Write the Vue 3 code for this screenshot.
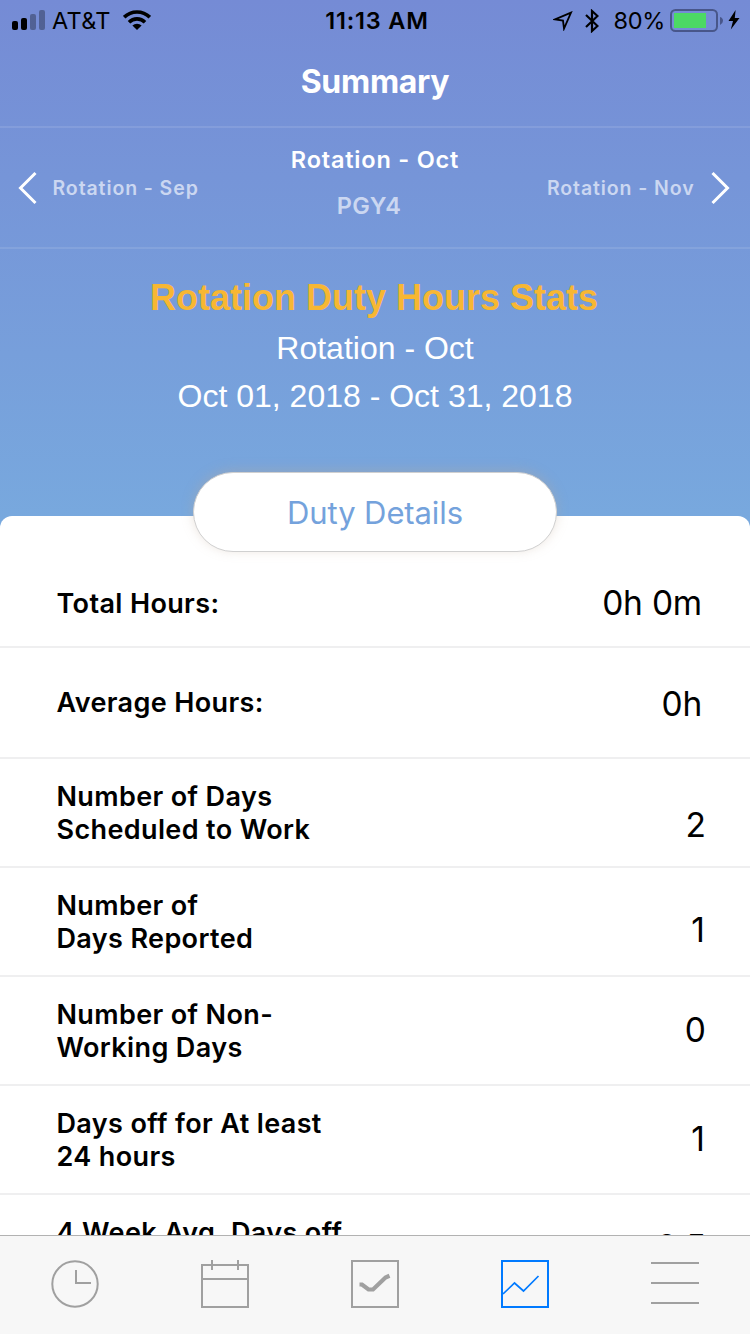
<template>
  <div class="summary-page">
    <header class="status-bar">
      <div class="status-left">
        <svg class="signal" width="34" height="20" viewBox="0 0 34 20">
          <rect x="0" y="11" width="6" height="9" rx="2" />
          <rect x="9" y="8" width="6" height="12" rx="2" />
          <rect class="dim" x="18" y="4" width="6" height="16" rx="2" />
          <rect class="dim" x="27" y="0" width="6" height="20" rx="2" />
        </svg>
        <span class="carrier">AT&amp;T</span>
        <svg class="wifi" width="28" height="20" viewBox="0 0 28 20">
          <path d="M1.2 7.2A18.2 18.2 0 0 1 26.8 7.2" />
          <path d="M6 12.2A11.4 11.4 0 0 1 22 12.2" />
          <path class="fill" d="M14 20L9.4 15.6A6.6 6.6 0 0 1 18.6 15.6Z" />
        </svg>
      </div>
      <div class="status-time">11:13 AM</div>
      <div class="status-right">
        <svg class="location" width="20" height="20" viewBox="0 0 20 20">
          <path d="M18 1.6L2 8.4L10 9.6L11 17.6Z" />
        </svg>
        <svg class="bluetooth" width="14" height="24" viewBox="0 0 14 24">
          <path d="M1 6L12.5 17L7 22V2L12.5 7L1 18" />
        </svg>
        <span class="percent">80%</span>
        <svg class="battery" width="54" height="24" viewBox="0 0 54 24">
          <rect class="shell" x="1" y="1" width="46" height="21" rx="4.5" />
          <rect class="level" x="4" y="4" width="32" height="15" />
          <path class="cap" d="M50 8Q53 9 53 11.8T50 16Z" />
        </svg>
        <svg class="bolt" width="12" height="20" viewBox="0 0 12 20">
          <path d="M7.6 0L0.5 11H5L2.8 19.5L11.5 8H6.8Z" />
        </svg>
      </div>
    </header>

    <h1 class="title">Summary</h1>

    <nav class="rotation-bar">
      <button class="rotation prev">
        <svg width="20" height="34" viewBox="0 0 20 34">
          <path d="M17.5 2L2.5 17L17.5 32" />
        </svg>
        <span>Rotation - Sep</span>
      </button>
      <div class="current">
        <div class="current-name">Rotation - Oct</div>
        <div class="current-level">PGY4</div>
      </div>
      <button class="rotation next">
        <span>Rotation - Nov</span>
        <svg width="20" height="34" viewBox="0 0 20 34">
          <path d="M2.5 2L17.5 17L2.5 32" />
        </svg>
      </button>
    </nav>

    <section class="hero">
      <h2>Rotation Duty Hours Stats</h2>
      <p class="hero-name">Rotation - Oct</p>
      <p class="hero-dates">Oct 01, 2018 - Oct 31, 2018</p>
    </section>

    <main class="sheet">
      <button class="details-btn">Duty Details</button>
      <div v-for="stat in stats" :key="stat.id" class="row" :class="stat.id">
        <div class="label">
          <div v-for="line in stat.label" :key="line">{{ line }}</div>
        </div>
        <div class="value">{{ stat.value }}</div>
      </div>
    </main>

    <footer class="tab-bar">
      <button v-for="tab in tabs" :key="tab" class="tab" :class="{ active: tab === activeTab }" @click="activeTab = tab">
        <svg width="48" height="48" viewBox="0 0 48 48">
          <template v-if="tab === 'clock'">
            <circle cx="24" cy="24" r="22.7" />
            <path d="M25 10V23H40" />
          </template>
          <template v-else-if="tab === 'calendar'">
            <rect x="1" y="5" width="46" height="42" />
            <path d="M1 19H47M11 0V10M37 0V10" />
          </template>
          <template v-else-if="tab === 'check'">
            <rect x="1" y="1" width="46" height="46" />
            <path class="tick" d="M8.5 24.5H11L17.5 29.5H22L34.5 17.5L38.5 15.8" />
          </template>
          <template v-else-if="tab === 'chart'">
            <rect x="1" y="1" width="46" height="46" />
            <path class="trend" d="M2 34L13.5 23L22.5 31L37.5 16" />
          </template>
          <path v-else d="M0 3H48M0 23H48M0 43H48" />
        </svg>
      </button>
    </footer>
  </div>
</template>

<script setup>
import { ref } from 'vue'

const stats = [
  { id: 'total', label: ['Total Hours:'], value: '0h 0m' },
  { id: 'average', label: ['Average Hours:'], value: '0h' },
  { id: 'scheduled', label: ['Number of Days', 'Scheduled to Work'], value: '2' },
  { id: 'reported', label: ['Number of', 'Days Reported'], value: '1' },
  { id: 'non-working', label: ['Number of Non-', 'Working Days'], value: '0' },
  { id: 'days-off', label: ['Days off for At least', '24 hours'], value: '1' },
  { id: 'week-avg', label: ['4 Week Avg. Days off'], value: '0.5' },
]

const tabs = ['clock', 'calendar', 'check', 'chart', 'menu']
const activeTab = ref('chart')
</script>

<style>
body {
  margin: 0;
  overflow: hidden;
}
</style>

<style scoped>
.summary-page {
  display: flex;
  flex-direction: column;
  width: 750px;
  height: 1334px;
  overflow: hidden;
  background: linear-gradient(#758bd5 0, #78a9de 530px);
  font-family: Inter, 'Liberation Sans', sans-serif;
  color: #000;
}

svg {
  display: block;
  flex: none;
  fill: none;
}

button {
  padding: 0;
  border: none;
  background: none;
  font-family: inherit;
  cursor: pointer;
}

.status-bar {
  display: grid;
  grid-template-columns: 1fr auto 1fr;
  height: 40px;
  padding: 0 10px 0 12px;
  align-items: center;
  font-size: 23.5px;
  line-height: 40px;
}

.status-left,
.status-right {
  display: flex;
  align-items: center;
}

.status-right {
  justify-content: flex-end;
}

.signal {
  fill: #000;
}

.signal .dim {
  opacity: 0.3;
}

.carrier {
  margin: 0 12px 0 6px;
  padding-top: 1px;
  line-height: 39px;
  letter-spacing: 0.3px;
}

.wifi path {
  stroke: #000;
  stroke-width: 3.6;
}

.wifi .fill {
  fill: #000;
  stroke: none;
}

.status-time {
  padding: 2px 0 0 2px;
  font-weight: 600;
  line-height: 38px;
  letter-spacing: 0.8px;
}

.location {
  margin-top: 1px;
}

.location path {
  stroke: #000;
  stroke-width: 1.8;
}

.bluetooth {
  margin: 1px 14px 0 12px;
}

.bluetooth path {
  stroke: #000;
  stroke-width: 2.2;
}

.percent {
  margin-right: 5px;
  padding-top: 2px;
  line-height: 38px;
  letter-spacing: -0.3px;
}

.battery {
  margin-top: 2px;
}

.battery .shell {
  stroke: #48568a;
  stroke-width: 2;
}

.battery .level {
  fill: #4cd964;
}

.battery .cap {
  fill: #48568a;
}

.bolt {
  margin-left: 4px;
  fill: #000;
}

.title {
  height: 86px;
  margin: 0;
  border-bottom: 2px solid rgba(255, 255, 255, 0.1);
  font-size: 32px;
  font-weight: 700;
  line-height: 84px;
  letter-spacing: -0.3px;
  text-align: center;
  color: #fff;
}

.rotation-bar {
  display: grid;
  grid-template-columns: 1fr auto 1fr;
  height: 119px;
  padding: 0 20px 0 18px;
  border-bottom: 2px solid rgba(255, 255, 255, 0.1);
  align-items: center;
}

.rotation {
  display: flex;
  align-items: center;
  gap: 14.5px;
  font-size: 19.5px;
  font-weight: 600;
  letter-spacing: 0.9px;
  color: #cbd7f1;
}

.rotation path {
  stroke: #fff;
  stroke-width: 3;
}

.next {
  justify-content: flex-end;
  gap: 15.5px;
}

.current {
  padding: 0 0 10px 2px;
  font-size: 23.5px;
  font-weight: 600;
  letter-spacing: 0.8px;
  line-height: 46px;
  text-align: center;
}

.current-name {
  color: #fff;
}

.current-level {
  padding-right: 12px;
  letter-spacing: 0.4px;
  color: #cbd7f1;
}

.hero {
  height: 267px;
  box-sizing: border-box;
  padding-top: 25px;
  font-family: 'Liberation Sans', Arial, sans-serif;
  line-height: 48px;
  text-align: center;
  color: #fff;
}

.hero h2 {
  margin: 0 2px 2px 0;
  font-size: 36px;
  font-weight: 700;
  color: #f7b733;
}

.hero p {
  margin: 0;
  font-size: 32px;
}

.sheet {
  position: relative;
  flex: 1;
  overflow: visible;
  border-radius: 12px 12px 0 0;
  background: #fff;
}

/* the pill straddles the top edge of the sheet */
.details-btn {
  position: absolute;
  top: -44px;
  left: 193px;
  width: 364px;
  height: 80px;
  border: 1px solid #d0d0d0;
  border-radius: 40px;
  background: #fff;
  box-shadow: 0 -2px 12px rgba(190, 165, 145, 0.35);
  font-size: 31px;
  letter-spacing: -0.1px;
  color: #74a2dc;
}

.row {
  display: flex;
  justify-content: space-between;
  height: 109px;
  box-sizing: border-box;
  padding: 0 44px 0 56.5px;
  border-bottom: 2px solid #efeff0;
}

.label {
  margin-top: 20.5px;
  font-size: 27px;
  font-weight: 600;
  line-height: 33px;
  letter-spacing: 0.37px;
  white-space: nowrap;
}

.value {
  margin-top: 33px;
  font-size: 33.5px;
  line-height: 40px;
}

.total {
  height: 132px;
}

.total .label {
  margin-top: 71px;
}

.total .value {
  margin-top: 67px;
}

.average {
  height: 111px;
}

.average .label {
  margin-top: 38px;
}

.average .value {
  margin-top: 36px;
}

.total .value,
.average .value {
  margin-right: 4px;
  letter-spacing: -0.2px;
}

.scheduled .value {
  margin-top: 46px;
}

.reported .value {
  margin-top: 42px;
}

.reported .value,
.days-off .value {
  margin-right: 1px;
}

.week-avg .value {
  margin-top: 32px;
}

.tab-bar {
  position: fixed;
  top: 1235px;
  left: 0;
  display: flex;
  width: 750px;
  height: 99px;
  box-sizing: border-box;
  border-top: 1px solid #b2b2b2;
  background: #f7f7f7;
}

.tab {
  display: flex;
  flex: 1;
  justify-content: center;
  padding-top: 24px;
  color: #a0a0a0;
}

.tab svg {
  stroke: currentColor;
  stroke-width: 2;
}

.tab.active {
  color: #007aff;
}

.tab .tick {
  stroke-width: 4.2;
}

.tab .trend {
  stroke-width: 1.7;
}
</style>
